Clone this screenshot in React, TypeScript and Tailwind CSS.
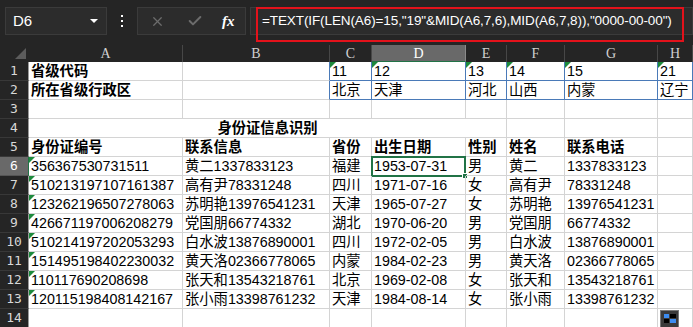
import { X, Check } from "lucide-react";

type Row = (string | null)[];

const rows: Row[] = [
  ["省级代码", "", "11", "12", "13", "14", "15", "21"],
  ["所在省级行政区", "", "北京", "天津", "河北", "山西", "内蒙", "辽宁"],
  ["", "", "", "", "", "", "", ""],
  ["", "", "", "", "", "", "", ""],
  ["身份证编号", "联系信息", "省份", "出生日期", "性别", "姓名", "联系电话", ""],
  ["356367530731511", "黄二1337833123", "福建", "1953-07-31", "男", "黄二", "1337833123", ""],
  ["510213197107161387", "高有尹78331248", "四川", "1971-07-16", "女", "高有尹", "78331248", ""],
  ["123262196507278063", "苏明艳13976541231", "天津", "1965-07-27", "女", "苏明艳", "13976541231", ""],
  ["426671197006208279", "党国朋66774332", "湖北", "1970-06-20", "男", "党国朋", "66774332", ""],
  ["510214197202053293", "白水波13876890001", "四川", "1972-02-05", "男", "白水波", "13876890001", ""],
  ["151495198402230032", "黄天洛02366778065", "内蒙", "1984-02-23", "男", "黄天洛", "02366778065", ""],
  ["110117690208698", "张天和13543218761", "北京", "1969-02-08", "女", "张天和", "13543218761", ""],
  ["120115198408142167", "张小雨13398761232", "天津", "1984-08-14", "女", "张小雨", "13398761232", ""],
  ["", "", "", "", "", "", "", ""],
];

const letters = ["A", "B", "C", "D", "E", "F", "G", "H"];

function Triangle() {
  return (
    <span className="absolute left-0 top-0 h-0 w-0 border-r-[6px] border-t-[6px] border-r-transparent border-t-[#1d8a3c]" />
  );
}

function TopBar() {
  return (
    <div className="relative flex h-[45px] items-start bg-[#252525] pt-[7px]">
      <div className="ml-[5px] flex h-[28px] w-[102px] items-center justify-between border border-[#3b3b3b] bg-[#2c2c2c] pl-[7px] pr-[8px] text-[15px] text-white">
        <span>D6</span>
        <span className="h-0 w-0 border-l-[4px] border-r-[4px] border-t-[4px] border-l-transparent border-r-transparent border-t-white" />
      </div>
      <div className="flex h-[28px] w-[30px] flex-col items-center justify-center gap-[3px]">
        <span className="h-[2px] w-[2px] bg-white" />
        <span className="h-[2px] w-[2px] bg-white" />
        <span className="h-[2px] w-[2px] bg-white" />
      </div>
      <div className="flex h-[28px] w-[109px] items-center border border-[#3b3b3b] bg-[#2c2c2c]">
        <X className="ml-[12px] h-[15px] w-[15px] text-[#6c6c6c]" strokeWidth={2} />
        <Check className="ml-[22px] h-[16px] w-[16px] text-[#6c6c6c]" strokeWidth={3} />
        <span className="ml-[19px] font-['Liberation_Serif'] text-[15px] font-bold italic text-white">fx</span>
      </div>
      <div className="ml-[4px] flex h-[28px] flex-1 items-center overflow-hidden whitespace-nowrap border border-[#3b3b3b] bg-[#2c2c2c] pl-[11px] font-['Liberation_Sans'] text-[13.5px] tracking-[-0.1px] text-white">
        =TEXT(IF(LEN(A6)=15,"19"&amp;MID(A6,7,6),MID(A6,7,8)),"0000-00-00")
      </div>
      <div className="pointer-events-none absolute left-[256px] top-[7px] h-[35px] w-[428px] border-2 border-[#e3121b]" />
    </div>
  );
}

export default function App() {
  return (
    <div className="relative h-[327px] w-[693px] overflow-hidden bg-white font-['Liberation_Sans','Noto_Sans_CJK_SC',sans-serif] text-[14.3px] text-black">
      <TopBar />
      <div className="grid grid-cols-[29px_154px_147px_42px_94px_41px_58px_93px_35px] grid-rows-[17px_repeat(14,19px)]">
        {/* column header row */}
        <div className="relative bg-[#252525]">
          <span className="absolute bottom-[3px] right-[3px] h-0 w-0 border-b-[11px] border-l-[11px] border-b-[#5c5c5c] border-l-transparent" />
        </div>
        {letters.map((l) => (
          <div
            key={l}
            className={
              l === "D"
                ? "flex items-center justify-center border-b border-r border-b-[#217346] border-r-[#8a8a8a] bg-[#696969] font-['Liberation_Serif'] text-[14px] text-white"
                : "flex items-center justify-center border-r border-[#474747] bg-[#252525] font-['Liberation_Serif'] text-[14px] text-[#d0d0d0]"
            }
          >
            {l}
          </div>
        ))}

        {rows.map((row, ri) => {
          const rowNum = ri + 1;
          const header = (
            <div
              key={`h${ri}`}
              className={
                rowNum === 6
                  ? "flex items-center justify-center border-b border-r border-b-[#555] border-r-[#217346] bg-[#696969] font-['DejaVu_Sans_Mono'] text-[13px] text-white"
                  : "flex items-center justify-center border-b border-r border-b-[#383838] border-r-[#9a9a9a] bg-[#252525] font-['DejaVu_Sans_Mono'] text-[13px] text-[#d8d8d8]"
              }
            >
              {rowNum}
            </div>
          );

          if (rowNum === 4) {
            return [
              header,
              <div
                key="merged"
                className="col-span-5 flex items-end justify-center border-b border-r border-[#d4d4d4] font-bold leading-[18px]"
              >
                身份证信息识别
              </div>,
              ...[5, 6, 7].map((ci) => (
                <div key={`c${ri}-${ci}`} className="border-b border-r border-[#d4d4d4]" />
              )),
            ];
          }

          return [
            header,
            ...row.map((val, ci) => {
              const blue = rowNum <= 2 && ci >= 1;
              const blueBottom = rowNum <= 2 && ci >= 2;
              const bold = (rowNum <= 2 && ci === 0) || rowNum === 5;
              const tri = (rowNum === 1 && ci >= 2) || (rowNum >= 6 && rowNum <= 13 && ci === 0);
              const selected = rowNum === 6 && ci === 3;
              return (
                <div
                  key={`c${ri}-${ci}`}
                  className={[
                    "relative flex items-end whitespace-nowrap border-b border-r pl-[2px] leading-[18px]",
                    blue ? "border-r-[#4a7ab8]" : "border-r-[#d4d4d4]",
                    blueBottom ? "border-b-[#4a7ab8]" : "border-b-[#d4d4d4]",
                    bold ? "font-bold" : "",
                  ].join(" ")}
                >
                  {tri && <Triangle />}
                  {val}
                  {selected && (
                    <span className="pointer-events-none absolute -left-px -top-px h-[21px] w-[95px] border-2 border-[#217346]">
                      <span className="absolute -bottom-[4px] -right-[4px] h-[6px] w-[6px] border border-white bg-[#217346]" />
                    </span>
                  )}
                </div>
              );
            }),
          ];
        })}
      </div>
      <div className="pointer-events-none absolute left-[660px] top-[310px] h-[18px] w-[19px] border border-[#777] bg-[#3a3a3a]">
        <span className="absolute left-[3px] top-[3px] h-[4px] w-[5px] bg-[#3c8cf0]" />
        <span className="absolute left-[9px] top-[3px] h-[4px] w-[6px] bg-black" />
        <span className="absolute left-[3px] top-[8px] h-[4px] w-[5px] bg-black" />
        <span className="absolute left-[9px] top-[8px] h-[4px] w-[6px] bg-[#3c8cf0]" />
      </div>
    </div>
  );
}
